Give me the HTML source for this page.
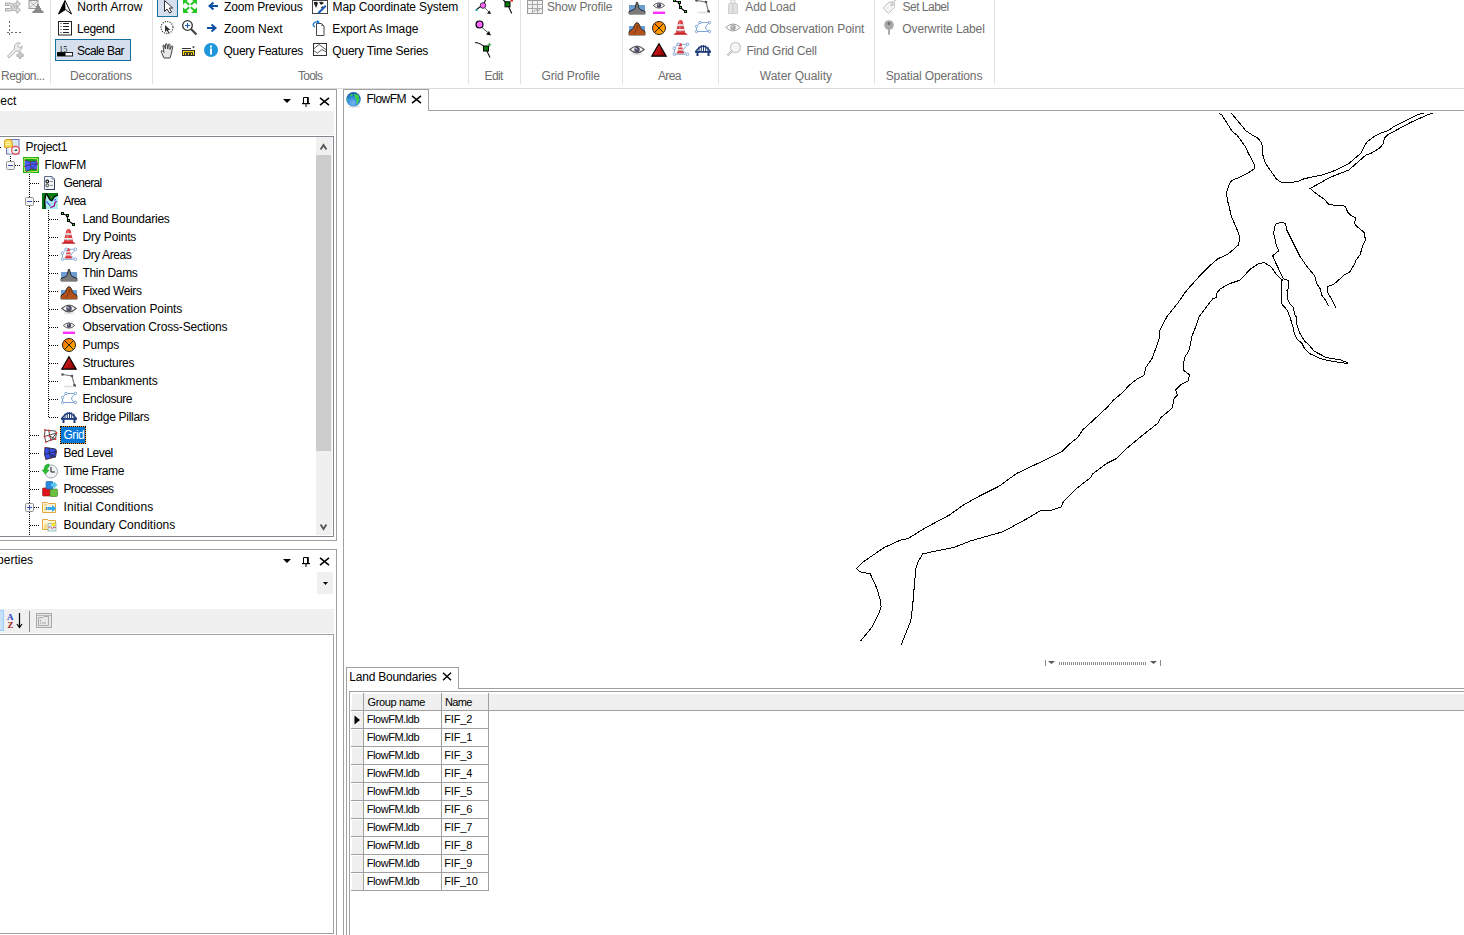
<!DOCTYPE html>
<html><head><meta charset="utf-8"><style>
html,body{margin:0;padding:0;}
body{width:1464px;height:935px;overflow:hidden;position:relative;background:#fff;font-family:"Liberation Sans", sans-serif;}
.t{position:absolute;white-space:nowrap;line-height:16px;}
.b{position:absolute;}
</style></head><body>
<div class="b" style="left:0px;top:88px;width:1464px;height:1px;background:#dcdcdc"></div>
<div class="b" style="left:50px;top:0px;width:1px;height:84px;background:#e1e1e1"></div>
<div class="b" style="left:152px;top:0px;width:1px;height:84px;background:#e1e1e1"></div>
<div class="b" style="left:468px;top:0px;width:1px;height:84px;background:#e1e1e1"></div>
<div class="b" style="left:520px;top:0px;width:1px;height:84px;background:#e1e1e1"></div>
<div class="b" style="left:622px;top:0px;width:1px;height:84px;background:#e1e1e1"></div>
<div class="b" style="left:718px;top:0px;width:1px;height:84px;background:#e1e1e1"></div>
<div class="b" style="left:874px;top:0px;width:1px;height:84px;background:#e1e1e1"></div>
<div class="b" style="left:994px;top:0px;width:1px;height:84px;background:#e1e1e1"></div>
<div class="t" style="left:1px;top:67.64px;font-size:12px;color:#6d6d6d;letter-spacing:-0.500px;">Region...</div>
<div class="t" style="left:70px;top:67.64px;font-size:12px;color:#6d6d6d;letter-spacing:-0.200px;">Decorations</div>
<div class="t" style="left:298px;top:67.64px;font-size:12px;color:#6d6d6d;letter-spacing:-0.750px;">Tools</div>
<div class="t" style="left:484.6px;top:67.64px;font-size:12px;color:#6d6d6d;letter-spacing:-0.667px;">Edit</div>
<div class="t" style="left:541.5px;top:67.64px;font-size:12px;color:#6d6d6d;letter-spacing:-0.136px;">Grid Profile</div>
<div class="t" style="left:658px;top:67.64px;font-size:12px;color:#6d6d6d;letter-spacing:-0.667px;">Area</div>
<div class="t" style="left:759.8px;top:67.64px;font-size:12px;color:#6d6d6d;letter-spacing:0.000px;">Water Quality</div>
<div class="t" style="left:885.7px;top:67.64px;font-size:12px;color:#6d6d6d;letter-spacing:-0.118px;">Spatial Operations</div>
<div class="b" style="left:55px;top:39px;width:76px;height:22px;background:#d5dfed;border:1px solid #16709f;box-sizing:border-box"></div>
<div class="t" style="left:77.2px;top:-1.26px;font-size:12px;color:#000;letter-spacing:0.200px;">North Arrow</div>
<div class="t" style="left:77.0px;top:20.64px;font-size:12px;color:#000;letter-spacing:-0.440px;">Legend</div>
<div class="t" style="left:77.0px;top:42.74px;font-size:12px;color:#000;letter-spacing:-0.562px;">Scale Bar</div>
<div class="b" style="left:157px;top:-5px;width:21px;height:22px;background:#d5dfed;border:1px solid #16709f;box-sizing:border-box"></div>
<div class="t" style="left:224px;top:-1.26px;font-size:12px;color:#000;letter-spacing:-0.167px;">Zoom Previous</div>
<div class="t" style="left:224px;top:20.64px;font-size:12px;color:#000;letter-spacing:0.000px;">Zoom Next</div>
<div class="t" style="left:223.5px;top:42.74px;font-size:12px;color:#000;letter-spacing:-0.269px;">Query Features</div>
<div class="t" style="left:332.6px;top:-1.26px;font-size:12px;color:#000;letter-spacing:-0.150px;">Map Coordinate System</div>
<div class="t" style="left:332.3px;top:20.64px;font-size:12px;color:#000;letter-spacing:-0.143px;">Export As Image</div>
<div class="t" style="left:332.3px;top:42.74px;font-size:12px;color:#000;letter-spacing:-0.206px;">Query Time Series</div>
<div class="t" style="left:547px;top:-1.26px;font-size:12px;color:#6d6d6d;letter-spacing:-0.182px;">Show Profile</div>
<div class="t" style="left:745.3px;top:-1.26px;font-size:12px;color:#6d6d6d;letter-spacing:-0.143px;">Add Load</div>
<div class="t" style="left:745.3px;top:20.64px;font-size:12px;color:#6d6d6d;letter-spacing:-0.050px;">Add Observation Point</div>
<div class="t" style="left:746.5px;top:42.74px;font-size:12px;color:#6d6d6d;letter-spacing:-0.231px;">Find Grid Cell</div>
<div class="t" style="left:902.5px;top:-1.26px;font-size:12px;color:#6d6d6d;letter-spacing:-0.500px;">Set Label</div>
<div class="t" style="left:902.3px;top:20.64px;font-size:12px;color:#6d6d6d;letter-spacing:-0.107px;">Overwrite Label</div>
<svg class="b" style="left:5px;top:0px;overflow:visible" width="16" height="16" viewBox="0 0 16 16"><g fill="#dedede" stroke="#a4a4a4" stroke-width="0.9" stroke-linejoin="round"><path d="M0.5 8.5 H4.5 Q6.5 8.5 7.5 6 Q8.5 3 11 3 H12 V0.5 L15.5 4 L12 7.5 V5.5 H11 Q10 5.5 9.5 7.5 Q8.5 11 5 11 H0.5z"/><path d="M0.5 3 H5 Q8 3 9 6 Q9.8 8.5 11 8.5 H12 V6.5 L15.5 10 L12 13.5 V11 H11 Q8 11 7 8 Q6.3 5.5 4.5 5.5 H0.5z"/></g></svg>
<svg class="b" style="left:28px;top:0px;overflow:visible" width="16" height="16" viewBox="0 0 16 16"><rect x="1" y="0.5" width="9" height="8" fill="#eee" stroke="#9a9a9a" stroke-width="1"/><path d="M2 1.5 L9 7.5 M9 1.5 L2 7.5" stroke="#9a9a9a" stroke-width="0.7"/><path d="M9 4 h2 v2 h1 v2 h1 v2 h1 v1 h1.5 v2 h-11 v-2 h1.5 v-1 h1 v-2 h1 v-2 h1z" fill="#8a8a8a"/></svg>
<svg class="b" style="left:7px;top:21px;overflow:visible" width="16" height="16" viewBox="0 0 16 16"><path d="M2.5 0 V14" stroke="#6a6a6a" stroke-dasharray="2 2" stroke-width="1"/><path d="M0 11.5 H15" stroke="#6a6a6a" stroke-dasharray="2 2" stroke-width="1"/></svg>
<svg class="b" style="left:6px;top:42px;overflow:visible" width="16" height="16" viewBox="0 0 16 16"><path d="M1.5 14 L8.5 7 Q7.5 3 10.5 1.2 Q12.5 0.3 14.2 1 L11.8 3.4 L12.6 5.4 L14.6 6 L16 3.8 Q16.5 6.8 14.2 8.6 Q12.2 9.8 10.2 9 L3 16z" fill="#ececec" stroke="#aaa" stroke-width="0.9"/><path d="M13 10 h2.2 v2.2 h2.2 v2.2 h-2.2 v2.2 h-2.2 v-2.2 h-2.2 v-2.2 h2.2z" fill="#c8c8c8" stroke="#a0a0a0" stroke-width="0.6"/></svg>
<svg class="b" style="left:58px;top:0px;overflow:visible" width="16" height="16" viewBox="0 0 16 16"><path d="M7 0.5 L13.5 14 L7.5 9.5 L0.5 14z" fill="#fff" stroke="#000" stroke-width="1"/><path d="M7 0.5 L7.5 9.5 L0.5 14z" fill="#000"/></svg>
<svg class="b" style="left:58px;top:21px;overflow:visible" width="16" height="16" viewBox="0 0 16 16"><rect x="0.5" y="0.5" width="13" height="13.5" fill="#fff" stroke="#222" stroke-width="1"/><path d="M2.5 2.5h1M2.5 5.5h1M2.5 8.5h1M2.5 11.5h1" stroke="#222" stroke-width="1"/><path d="M5 2.5h6M5 5.5h6M5 8.5h6M5 11.5h6" stroke="#222" stroke-width="1"/></svg>
<svg class="b" style="left:57px;top:44px;overflow:visible" width="16" height="16" viewBox="0 0 16 16"><text x="2" y="7.5" font-family="Liberation Serif" font-size="8.5" fill="#222">15</text><rect x="0.5" y="8.5" width="15" height="3.5" fill="#fff" stroke="#222" stroke-width="1"/><rect x="0.5" y="8.5" width="8" height="3.5" fill="#000"/></svg>
<svg class="b" style="left:163px;top:0px;overflow:visible" width="16" height="16" viewBox="0 0 16 16"><path d="M1.5 0.5 V11.5 L4 9 L6.5 13 L8.5 12 L6.3 8 L9.8 8z" fill="#fff" stroke="#333" stroke-width="1"/></svg>
<svg class="b" style="left:183px;top:0px;overflow:visible" width="16" height="16" viewBox="0 0 16 16"><g><path d="M0 7.2 V13 H5.8 Z" fill="#22c522"/><path d="M2 11 L6.2 7.2" stroke="#22c522" stroke-width="1.9"/></g><g transform="translate(14,0) scale(-1,1)"><path d="M0 7.2 V13 H5.8 Z" fill="#22c522"/><path d="M2 11 L6.2 7.2" stroke="#22c522" stroke-width="1.9"/></g><g transform="translate(0,12) scale(1,-1)"><path d="M0 7.2 V13 H5.8 Z" fill="#22c522"/><path d="M2 11 L6.2 7.2" stroke="#22c522" stroke-width="1.9"/></g><g transform="translate(14,12) scale(-1,-1)"><path d="M0 7.2 V13 H5.8 Z" fill="#22c522"/><path d="M2 11 L6.2 7.2" stroke="#22c522" stroke-width="1.9"/></g></svg>
<svg class="b" style="left:207px;top:2px;overflow:visible" width="16" height="16" viewBox="0 0 16 16"><path d="M11 4 H3 M6.5 0.5 L2.5 4 L6.5 7.5" stroke="#0b4fa2" stroke-width="2" fill="none"/></svg>
<svg class="b" style="left:160px;top:21px;overflow:visible" width="16" height="16" viewBox="0 0 16 16"><circle cx="7" cy="6.5" r="6" fill="none" stroke="#333" stroke-width="1.3" stroke-linecap="round" stroke-dasharray="0.01 2.35"/><path d="M5 4 V11 L6.8 9.5 L8.5 12.5 L9.5 12 L8 9 L10.5 9z" fill="#333"/></svg>
<svg class="b" style="left:182px;top:20px;overflow:visible" width="16" height="16" viewBox="0 0 16 16"><circle cx="5.5" cy="5.5" r="4.8" fill="none" stroke="#333" stroke-width="1.3"/><path d="M9 9 L14.5 14.5" stroke="#444" stroke-width="2.2"/><path d="M5.5 3 V8 M3 5.5 H8" stroke="#1a5fb4" stroke-width="1.2"/></svg>
<svg class="b" style="left:207px;top:24px;overflow:visible" width="16" height="16" viewBox="0 0 16 16"><path d="M0 4 H8 M4.5 0.5 L8.5 4 L4.5 7.5" stroke="#0b4fa2" stroke-width="2" fill="none"/></svg>
<svg class="b" style="left:160px;top:43px;overflow:visible" width="16" height="16" viewBox="0 0 16 16"><path d="M4 15 L1.5 9.5 Q0.5 7.5 2 7.5 L4 9.5 L3 3 Q3 1.8 4 2 L5.5 6 L5.5 1 Q6.3 0 7 1 L7.8 6 L8.5 1.3 Q9.5 0.5 10 1.5 L10 6.5 L11.5 3 Q12.5 2.5 12.8 3.5 L11.5 10 L10 15z" fill="#e8e8e8" stroke="#333" stroke-width="0.9"/></svg>
<svg class="b" style="left:182px;top:46px;overflow:visible" width="16" height="16" viewBox="0 0 16 16"><path d="M0 2.5 H9" stroke="#333" stroke-width="1"/><path d="M10 0.5 h3 l-1.5 2z" fill="#333"/><rect x="0.5" y="4.5" width="12" height="5" fill="#ffd800" stroke="#333" stroke-width="1"/><path d="M2.5 9.5V6.5h2v3M5.5 9.5V6.5h2v3M8.5 9.5V6.5h2v3" fill="none" stroke="#333" stroke-width="1"/></svg>
<svg class="b" style="left:204px;top:43px;overflow:visible" width="16" height="16" viewBox="0 0 16 16"><circle cx="7" cy="7" r="7" fill="#1e96dc"/><rect x="6" y="5.5" width="2" height="6" fill="#fff"/><rect x="6" y="2.5" width="2" height="2" fill="#fff"/></svg>
<svg class="b" style="left:312px;top:0px;overflow:visible" width="16" height="16" viewBox="0 0 16 16"><rect x="0.5" y="0.5" width="15" height="13" fill="#fff" stroke="#444" stroke-width="1"/><path d="M2 2 Q5 1 6 3 Q5 6 4 8 Q3 5 2 4z M7 2 Q10 1 12 3 L9 5z M10 6 Q12 7 11 9 L9 8z" fill="#222"/><path d="M5.5 12.5 L13 5 L14.5 6.5 L7 14z" fill="#1a5fb4"/></svg>
<svg class="b" style="left:312px;top:20px;overflow:visible" width="16" height="16" viewBox="0 0 16 16"><path d="M4.5 3.5 h5 l2.5 2.5 v9.5 h-7.5z" fill="#fff" stroke="#444" stroke-width="1"/><path d="M9.5 3.5 v2.5 h2.5" fill="#666"/><path d="M3 7 Q-0.5 5 2.5 2.5 Q4 1.5 6 2" stroke="#1a7ad4" stroke-width="1.3" fill="none"/><path d="M5 0 L8 2 L5 4z" fill="#1a7ad4"/></svg>
<svg class="b" style="left:313px;top:43px;overflow:visible" width="16" height="16" viewBox="0 0 16 16"><rect x="0.5" y="0.5" width="13" height="12" fill="#fff" stroke="#333" stroke-width="1"/><path d="M0.5 6 L6 1.5 L13.5 7 M0.5 7.5 L4.5 10 L9 6.5 L13.5 9" stroke="#333" stroke-width="0.8" fill="none"/></svg>
<svg class="b" style="left:475px;top:0px;overflow:visible" width="16" height="16" viewBox="0 0 16 16"><path d="M11 -1 L8.5 4.5 L1.5 9.5" stroke="#111" stroke-width="1.1" fill="none"/><circle cx="8" cy="5.5" r="2.8" fill="#ff66ff" stroke="#111" stroke-width="0.8"/><rect x="0.5" y="9" width="2" height="2" fill="#20a0b0"/><path d="M10 8 L14 12" stroke="#333" stroke-width="0.7"/><path d="M12 13.5 L16 14 L14.5 10.5z" fill="#111"/></svg>
<svg class="b" style="left:501px;top:0px;overflow:visible" width="16" height="16" viewBox="0 0 16 16"><path d="M1.5 -1 L6.5 4.3 L10.8 13.5" stroke="#111" stroke-width="1.1" fill="none"/><rect x="4" y="1.8" width="5" height="5" fill="#0a7a0a" stroke="#000" stroke-width="1"/><rect x="9.5" y="0" width="2.5" height="1.5" fill="#e02020"/></svg>
<svg class="b" style="left:475px;top:20px;overflow:visible" width="16" height="16" viewBox="0 0 16 16"><circle cx="4.5" cy="4.5" r="3.5" fill="#ff66ff" stroke="#000" stroke-width="1.2"/><path d="M7 7.5 L13.5 13" stroke="#222" stroke-width="0.8"/><path d="M11 14.5 L16 15.5 L14 11z" fill="#111"/></svg>
<svg class="b" style="left:475px;top:42px;overflow:visible" width="16" height="16" viewBox="0 0 16 16"><path d="M0 0.5 Q6 1 10.5 6 L15 15.5" stroke="#111" stroke-width="1.1" fill="none"/><rect x="8.5" y="4" width="5" height="5" fill="#0a7a0a" stroke="#000" stroke-width="1"/><path d="M14.5 1 V4.6 M12.7 2.8 H16.3" stroke="#2a9a2a" stroke-width="0.9"/></svg>
<svg class="b" style="left:527px;top:0px;overflow:visible" width="16" height="16" viewBox="0 0 16 16"><rect x="0.5" y="0.5" width="15" height="13" fill="#f2f2f2" stroke="#9a9a9a"/><path d="M0.5 4.5h15M0.5 8.5h15M5.5 0.5v13M10.5 0.5v13" stroke="#aaa"/><path d="M6.5 12 L9 9.5 L11 11 L14 8" stroke="#999" fill="none"/></svg>
<svg class="b" style="left:727px;top:0px;overflow:visible" width="16" height="16" viewBox="0 0 16 16"><rect x="4" y="0" width="4" height="3" fill="none" stroke="#ccc"/><path d="M2 3.5 h8 l0.5 1 v9 h-9 v-9z" fill="#e2e2e2" stroke="#cfcfcf"/><rect x="5" y="4" width="2" height="9" fill="#d5d5d5"/></svg>
<svg class="b" style="left:725px;top:23px;overflow:visible" width="16" height="16" viewBox="0 0 16 16"><path d="M0.8 4.5 Q8 -2.5 15.2 4.5 Q8 11.5 0.8 4.5z" fill="#fff" stroke="#9a9a9a" stroke-width="1"/><circle cx="8" cy="4.5" r="2.8" fill="#a8a8a8"/><circle cx="7.2" cy="3.8" r="0.8" fill="#eee"/></svg>
<svg class="b" style="left:726px;top:42px;overflow:visible" width="16" height="16" viewBox="0 0 16 16"><circle cx="9.5" cy="5.5" r="5" fill="#f4f4f4" stroke="#c4c4c4" stroke-width="1.1"/><path d="M6 9 L1.5 13.5" stroke="#bbb" stroke-width="2.4"/><path d="M6 9 L1.5 13.5" stroke="#f4f4f4" stroke-width="0.8"/></svg>
<svg class="b" style="left:882px;top:0px;overflow:visible" width="16" height="16" viewBox="0 0 16 16"><path d="M1 8 L7 2 L12.5 2 L12.5 7.5 L6.5 13.5z" fill="#f2f2f2" stroke="#c4c4c4" stroke-width="1"/><circle cx="10" cy="4.5" r="1.1" fill="none" stroke="#bbb"/><path d="M10 3.5 Q12 -1 14 1" stroke="#c4c4c4" fill="none"/></svg>
<svg class="b" style="left:884px;top:20px;overflow:visible" width="16" height="16" viewBox="0 0 16 16"><circle cx="5" cy="5" r="4.8" fill="#a9a9a9"/><circle cx="5" cy="3.5" r="1.5" fill="#6e6e6e"/><rect x="4" y="8" width="2" height="7" rx="1" fill="#a9a9a9"/></svg>
<svg class="b" style="left:629px;top:2px;overflow:visible" width="16" height="16" viewBox="0 0 16 16"><rect x="0" y="3" width="16" height="9" fill="#6e9ed0"/><path d="M0 9.5 L5 7.5 Q6.5 6.5 6.8 3 Q7.2 0 8 0 Q8.8 0 9.2 3 Q9.5 6.5 11 7.5 L16 9.5 V12 H0z" fill="#7a7a7a" stroke="#111" stroke-width="0.8"/><rect x="0" y="10" width="16" height="2" fill="#7a7a7a"/></svg>
<svg class="b" style="left:651px;top:2px;overflow:visible" width="16" height="16" viewBox="0 0 16 16"><path d="M2.3 3.5 Q8 -1.8 13.7 3.5 Q8 8.8 2.3 3.5z" fill="#fafafa" stroke="#5a5a5a" stroke-width="1"/><circle cx="8" cy="3.5" r="2.2" fill="#46465e"/><circle cx="7.3" cy="2.8" r="0.6" fill="#fff"/><rect x="2" y="9.6" width="12" height="2.4" fill="#ff30ff"/></svg>
<svg class="b" style="left:673px;top:-1px;overflow:visible" width="16" height="16" viewBox="0 0 16 16"><path d="M1 1.5 L6 3.5 L7 8.5 L12.5 12.5" stroke="#000" stroke-width="1.2" fill="none"/><rect x="0" y="0" width="3" height="3" fill="#000"/><rect x="5" y="2" width="3" height="3" fill="#000"/><rect x="6" y="7" width="3" height="3" fill="#000"/><rect x="11" y="11" width="3" height="3" fill="#000"/><rect x="1" y="1" width="1" height="1" fill="#2f2"/><rect x="6" y="3" width="1" height="1" fill="#2f2"/><rect x="7" y="8" width="1" height="1" fill="#2f2"/><rect x="12" y="12" width="1" height="1" fill="#2f2"/></svg>
<svg class="b" style="left:695px;top:-1px;overflow:visible" width="16" height="16" viewBox="0 0 16 16"><path d="M1.5 1.5 L11 3 L13.5 12.5" stroke="#777" stroke-width="1.1" fill="none"/><circle cx="1.5" cy="1.5" r="1.3" fill="#555"/><circle cx="11" cy="3" r="1.3" fill="#555"/><circle cx="13.5" cy="12.5" r="1.5" fill="#444"/><ellipse cx="8" cy="13.5" rx="6" ry="0.9" fill="#e2e2e2"/></svg>
<svg class="b" style="left:629px;top:23px;overflow:visible" width="16" height="16" viewBox="0 0 16 16"><rect x="0" y="3" width="16" height="9" fill="#6e9ed0"/><path d="M0 8.5 L3 6.5 Q5 5 5.5 2 Q6.5 -0.3 8 -0.3 Q9.5 -0.3 10.5 2 Q11 5 13 6.5 L16 8.5 V12 H0z" fill="#b0501a" stroke="#111" stroke-width="0.8"/><rect x="0" y="9.5" width="16" height="2.5" fill="#b0501a"/><path d="M5 11 Q8 6 9 2" stroke="#8a3a10" fill="none"/></svg>
<svg class="b" style="left:652px;top:21px;overflow:visible" width="16" height="16" viewBox="0 0 16 16"><defs><linearGradient id="pg" x1="0" y1="0" x2="1" y2="1"><stop offset="0" stop-color="#ff6a00"/><stop offset="1" stop-color="#ffb800"/></linearGradient></defs><circle cx="7" cy="7" r="6.5" fill="url(#pg)" stroke="#222" stroke-width="1"/><path d="M2.5 2.5 L11.5 11.5 M11.5 2.5 L2.5 11.5" stroke="#222" stroke-width="1"/></svg>
<svg class="b" style="left:673px;top:20px;overflow:visible" width="16" height="16" viewBox="0 0 16 16"><path d="M4.8 4 Q5 0 7.5 0 Q10 0 10.2 4 L12.3 13.2 H2.7z" fill="#e23c40"/><path d="M7 1 Q6.5 6 7 12" stroke="#f08a8a" stroke-width="1" fill="none"/><path d="M4.6 4.3 H10.4 L10.8 6 H4.2z M3.7 9 H11.3 L11.7 10.8 H3.3z" fill="#eef2f2"/><path d="M4.3 5.9 H10.7 M3.4 10.8 H11.6" stroke="#9ab0b0" stroke-width="0.5"/><path d="M0.3 14.7 Q1.5 13 3 13 H12 Q13.5 13 14.7 14.7z" fill="#c42024"/></svg>
<svg class="b" style="left:695px;top:21px;overflow:visible" width="16" height="16" viewBox="0 0 16 16"><path d="M1.5 10.5 L1.5 5.5 L5 1.5 L14.5 1.5 Q10 5 10.5 7 Q11 9 14.5 10.5z" fill="none" stroke="#7fa6d6" stroke-width="1"/><circle cx="5" cy="1.5" r="1.2" fill="#fff" stroke="#7fa6d6"/><circle cx="14.5" cy="1.5" r="1.2" fill="#fff" stroke="#7fa6d6"/><circle cx="1.5" cy="5.5" r="1.2" fill="#fff" stroke="#7fa6d6"/><circle cx="1.5" cy="10.5" r="1.2" fill="#fff" stroke="#7fa6d6"/><circle cx="14.5" cy="10.5" r="1.2" fill="#fff" stroke="#7fa6d6"/></svg>
<svg class="b" style="left:629px;top:45px;overflow:visible" width="16" height="16" viewBox="0 0 16 16"><ellipse cx="8" cy="9.3" rx="5.5" ry="1" fill="#e4e4e4"/><path d="M0.8 4.5 Q8 -2.3 15.2 4.5 Q8 11.3 0.8 4.5z" fill="#fafafa" stroke="#5a5a5a" stroke-width="1.1"/><circle cx="8" cy="4.5" r="2.7" fill="#46465e"/><circle cx="8" cy="4.5" r="1.2" fill="#6a6a90"/><circle cx="7" cy="3.6" r="0.7" fill="#fff"/></svg>
<svg class="b" style="left:651px;top:43px;overflow:visible" width="16" height="16" viewBox="0 0 16 16"><defs><linearGradient id="sg" x1="0" y1="0" x2="1" y2="0.6"><stop offset="0" stop-color="#ff2a2a"/><stop offset="1" stop-color="#8a0000"/></linearGradient></defs><path d="M8 0.8 L15.2 13.2 H0.8z" fill="url(#sg)" stroke="#000" stroke-width="1.2" stroke-linejoin="miter"/></svg>
<svg class="b" style="left:673px;top:42px;overflow:visible" width="16" height="16" viewBox="0 0 16 16"><path d="M5.1 2.3 H14.5 L9.5 8.5 L14.5 12.3 H1.4 V6.3z" fill="none" stroke="#88aad8" stroke-width="1"/><path d="M5.8 4 Q6 1 7.4 1 Q8.8 1 9 4 L10.4 10.2 H4.4z" fill="#e23c40"/><path d="M5.6 4.3 H9.2 L9.5 5.6 H5.3z M5 7.2 H9.8 L10.1 8.5 H4.7z" fill="#eef2f2"/><path d="M3.8 10.8 H11" stroke="#c42024" stroke-width="1.2"/><g fill="#fff" stroke="#88aad8" stroke-width="1"><circle cx="1.4" cy="6.3" r="1.3"/><circle cx="5.1" cy="2.3" r="1.3"/><circle cx="14.5" cy="2.3" r="1.3"/><circle cx="14.5" cy="12.3" r="1.3"/><circle cx="1.4" cy="12.3" r="1.3"/></g></svg>
<svg class="b" style="left:695px;top:43px;overflow:visible" width="16" height="16" viewBox="0 0 16 16"><path d="M0.8 8.5 Q8 -2 15.2 8.5" stroke="#1e3a7a" stroke-width="1.6" fill="none"/><path d="M4 3.5V8 M6.3 2.3V8 M8.5 2V8 M10.7 2.4V8 M13 3.6V8" stroke="#1e3a7a" stroke-width="1"/><rect x="0" y="8" width="16" height="1.8" fill="#1e3a7a"/><rect x="1.5" y="9" width="2" height="4" fill="#1e3a7a"/><rect x="12.5" y="9" width="2" height="4" fill="#1e3a7a"/></svg>
<div class="b" style="left:336px;top:89px;width:1px;height:452px;background:#a0a0a0"></div>
<div class="b" style="left:0px;top:89px;width:337px;height:1px;background:#a0a0a0"></div>
<div class="b" style="left:0px;top:540px;width:337px;height:1px;background:#a0a0a0"></div>
<div class="t" style="left:-21px;top:92.54px;font-size:12px;color:#000;">Project</div>
<div class="b" style="left:0px;top:111px;width:334px;height:24px;background:#f0f0f0"></div>
<div class="b" style="left:0px;top:136px;width:334px;height:1px;background:#828790"></div>
<div class="b" style="left:333px;top:136px;width:1px;height:401px;background:#828790"></div>
<div class="b" style="left:0px;top:536px;width:334px;height:1px;background:#828790"></div>
<div class="b" style="left:316px;top:137px;width:16px;height:398px;background:#f0f0f0"></div>
<div class="b" style="left:316px;top:155px;width:15px;height:296px;background:#cdcdcd"></div>
<div class="b" style="left:0px;top:549px;width:337px;height:1px;background:#a0a0a0"></div>
<div class="b" style="left:336px;top:549px;width:1px;height:386px;background:#a0a0a0"></div>
<div class="t" style="left:-21.6px;top:552.14px;font-size:12px;color:#000;">Properties</div>
<div class="b" style="left:317px;top:572px;width:16px;height:22px;background:#f0f0f0"></div>
<div class="b" style="left:0px;top:609px;width:334px;height:24px;background:#f0f0f0"></div>
<div class="b" style="left:0px;top:634px;width:334px;height:1px;background:#a0a0a0"></div>
<div class="b" style="left:333px;top:634px;width:1px;height:300px;background:#a0a0a0"></div>
<div class="b" style="left:0px;top:933px;width:334px;height:1px;background:#a0a0a0"></div>
<div class="b" style="left:343px;top:89px;width:1px;height:846px;background:#a0a0a0"></div>
<div class="b" style="left:343px;top:89px;width:86px;height:1px;background:#a0a0a0"></div>
<div class="b" style="left:428px;top:89px;width:1px;height:22px;background:#a0a0a0"></div>
<div class="b" style="left:428px;top:110px;width:1036px;height:1px;background:#a0a0a0"></div>
<div class="t" style="left:366.5px;top:90.54px;font-size:12px;color:#000;letter-spacing:-0.540px;">FlowFM</div>
<div class="b" style="left:346px;top:667px;width:113px;height:1px;background:#a0a0a0"></div>
<div class="b" style="left:346px;top:667px;width:1px;height:268px;background:#a0a0a0"></div>
<div class="b" style="left:458px;top:667px;width:1px;height:22px;background:#a0a0a0"></div>
<div class="b" style="left:458px;top:688px;width:1006px;height:1px;background:#a0a0a0"></div>
<div class="t" style="left:349.3px;top:668.84px;font-size:12px;color:#000;letter-spacing:-0.229px;">Land Boundaries</div>
<div class="b" style="left:349px;top:691px;width:1115px;height:1px;background:#a0a0a0"></div>
<div class="b" style="left:349px;top:691px;width:1px;height:244px;background:#a0a0a0"></div>
<div class="b" style="left:0px;top:147px;width:2px;height:1px;background:repeating-linear-gradient(to right,#000 0 1px,transparent 1px 2px)"></div>
<div class="b" style="left:10px;top:156px;width:1px;height:5px;background:repeating-linear-gradient(to bottom,#000 0 1px,transparent 1px 2px)"></div>
<div class="b" style="left:15px;top:165px;width:5px;height:1px;background:repeating-linear-gradient(to right,#000 0 1px,transparent 1px 2px)"></div>
<div class="b" style="left:29px;top:174px;width:1px;height:362px;background:repeating-linear-gradient(to bottom,#000 0 1px,transparent 1px 2px)"></div>
<div class="b" style="left:48px;top:210px;width:1px;height:207px;background:repeating-linear-gradient(to bottom,#000 0 1px,transparent 1px 2px)"></div>
<div class="b" style="left:30px;top:183px;width:9px;height:1px;background:repeating-linear-gradient(to right,#000 0 1px,transparent 1px 2px)"></div>
<div class="b" style="left:30px;top:201px;width:9px;height:1px;background:repeating-linear-gradient(to right,#000 0 1px,transparent 1px 2px)"></div>
<div class="b" style="left:49px;top:219px;width:9px;height:1px;background:repeating-linear-gradient(to right,#000 0 1px,transparent 1px 2px)"></div>
<div class="b" style="left:49px;top:237px;width:9px;height:1px;background:repeating-linear-gradient(to right,#000 0 1px,transparent 1px 2px)"></div>
<div class="b" style="left:49px;top:255px;width:9px;height:1px;background:repeating-linear-gradient(to right,#000 0 1px,transparent 1px 2px)"></div>
<div class="b" style="left:49px;top:273px;width:9px;height:1px;background:repeating-linear-gradient(to right,#000 0 1px,transparent 1px 2px)"></div>
<div class="b" style="left:49px;top:291px;width:9px;height:1px;background:repeating-linear-gradient(to right,#000 0 1px,transparent 1px 2px)"></div>
<div class="b" style="left:49px;top:309px;width:9px;height:1px;background:repeating-linear-gradient(to right,#000 0 1px,transparent 1px 2px)"></div>
<div class="b" style="left:49px;top:327px;width:9px;height:1px;background:repeating-linear-gradient(to right,#000 0 1px,transparent 1px 2px)"></div>
<div class="b" style="left:49px;top:345px;width:9px;height:1px;background:repeating-linear-gradient(to right,#000 0 1px,transparent 1px 2px)"></div>
<div class="b" style="left:49px;top:363px;width:9px;height:1px;background:repeating-linear-gradient(to right,#000 0 1px,transparent 1px 2px)"></div>
<div class="b" style="left:49px;top:381px;width:9px;height:1px;background:repeating-linear-gradient(to right,#000 0 1px,transparent 1px 2px)"></div>
<div class="b" style="left:49px;top:399px;width:9px;height:1px;background:repeating-linear-gradient(to right,#000 0 1px,transparent 1px 2px)"></div>
<div class="b" style="left:49px;top:417px;width:9px;height:1px;background:repeating-linear-gradient(to right,#000 0 1px,transparent 1px 2px)"></div>
<div class="b" style="left:30px;top:435px;width:9px;height:1px;background:repeating-linear-gradient(to right,#000 0 1px,transparent 1px 2px)"></div>
<div class="b" style="left:30px;top:453px;width:9px;height:1px;background:repeating-linear-gradient(to right,#000 0 1px,transparent 1px 2px)"></div>
<div class="b" style="left:30px;top:471px;width:9px;height:1px;background:repeating-linear-gradient(to right,#000 0 1px,transparent 1px 2px)"></div>
<div class="b" style="left:30px;top:489px;width:9px;height:1px;background:repeating-linear-gradient(to right,#000 0 1px,transparent 1px 2px)"></div>
<div class="b" style="left:30px;top:507px;width:9px;height:1px;background:repeating-linear-gradient(to right,#000 0 1px,transparent 1px 2px)"></div>
<div class="b" style="left:30px;top:525px;width:9px;height:1px;background:repeating-linear-gradient(to right,#000 0 1px,transparent 1px 2px)"></div>
<div class="t" style="left:25.5px;top:139.14px;font-size:12px;color:#000;letter-spacing:-0.286px;">Project1</div>
<div class="t" style="left:44.6px;top:157.14px;font-size:12px;color:#000;letter-spacing:-0.220px;">FlowFM</div>
<div class="t" style="left:63.5px;top:175.14px;font-size:12px;color:#000;letter-spacing:-0.667px;">General</div>
<div class="t" style="left:63.5px;top:193.14px;font-size:12px;color:#000;letter-spacing:-0.867px;">Area</div>
<div class="t" style="left:82.5px;top:211.14px;font-size:12px;color:#000;letter-spacing:-0.243px;">Land Boundaries</div>
<div class="t" style="left:82.5px;top:229.14px;font-size:12px;color:#000;letter-spacing:-0.167px;">Dry Points</div>
<div class="t" style="left:82.5px;top:247.14px;font-size:12px;color:#000;letter-spacing:-0.438px;">Dry Areas</div>
<div class="t" style="left:82.5px;top:265.14px;font-size:12px;color:#000;letter-spacing:-0.338px;">Thin Dams</div>
<div class="t" style="left:82.5px;top:283.14px;font-size:12px;color:#000;letter-spacing:-0.370px;">Fixed Weirs</div>
<div class="t" style="left:82.5px;top:301.14px;font-size:12px;color:#000;letter-spacing:-0.094px;">Observation Points</div>
<div class="t" style="left:82.5px;top:319.14px;font-size:12px;color:#000;letter-spacing:-0.180px;">Observation Cross-Sections</div>
<div class="t" style="left:82.5px;top:337.14px;font-size:12px;color:#000;letter-spacing:-0.125px;">Pumps</div>
<div class="t" style="left:82.5px;top:355.14px;font-size:12px;color:#000;letter-spacing:-0.300px;">Structures</div>
<div class="t" style="left:82.5px;top:373.14px;font-size:12px;color:#000;letter-spacing:-0.150px;">Embankments</div>
<div class="t" style="left:82.5px;top:391.14px;font-size:12px;color:#000;letter-spacing:-0.425px;">Enclosure</div>
<div class="t" style="left:82.5px;top:409.14px;font-size:12px;color:#000;letter-spacing:-0.277px;">Bridge Pillars</div>
<div class="b" style="left:60px;top:426px;width:26px;height:18px;background:#0078d7;border:1px solid #ff9a30;box-sizing:border-box;outline:1px dotted #000;outline-offset:-1px"></div>
<div class="t" style="left:63.5px;top:427.14px;font-size:12px;color:#fff;letter-spacing:-0.467px;">Grid</div>
<div class="t" style="left:63.5px;top:445.14px;font-size:12px;color:#000;letter-spacing:-0.450px;">Bed Level</div>
<div class="t" style="left:63.5px;top:463.14px;font-size:12px;color:#000;letter-spacing:-0.367px;">Time Frame</div>
<div class="t" style="left:63.5px;top:481.14px;font-size:12px;color:#000;letter-spacing:-0.675px;">Processes</div>
<div class="t" style="left:63.5px;top:499.14px;font-size:12px;color:#000;letter-spacing:0.094px;">Initial Conditions</div>
<div class="t" style="left:63.5px;top:517.14px;font-size:12px;color:#000;letter-spacing:0.022px;">Boundary Conditions</div>
<svg class="b" style="left:6px;top:161px;" width="9" height="9" viewBox="0 0 9 9"><rect x="0.5" y="0.5" width="8" height="8" rx="1" fill="#f4f4f4" stroke="#919191"/><rect x="2" y="4" width="5" height="1" fill="#3a50a8"/></svg>
<svg class="b" style="left:25px;top:197px;" width="9" height="9" viewBox="0 0 9 9"><rect x="0.5" y="0.5" width="8" height="8" rx="1" fill="#f4f4f4" stroke="#919191"/><rect x="2" y="4" width="5" height="1" fill="#3a50a8"/></svg>
<svg class="b" style="left:25px;top:503px;" width="9" height="9" viewBox="0 0 9 9"><rect x="0.5" y="0.5" width="8" height="8" rx="1" fill="#f4f4f4" stroke="#919191"/><rect x="2" y="4" width="5" height="1" fill="#3a50a8"/><rect x="4" y="2" width="1" height="5" fill="#3a50a8"/></svg>
<svg class="b" style="left:4px;top:139px;overflow:visible" width="16" height="16" viewBox="0 0 16 16"><rect x="2.5" y="0.5" width="12.5" height="14.5" fill="#d4e8f6" stroke="#7a78b0" stroke-width="1"/><rect x="5" y="1" width="2.5" height="13.5" fill="#f4fbff"/><path d="M0.5 1.5 L3 0.5 L6 0.5 L8 2 L8.5 8 L0.5 8.5z" fill="#f8dc60" stroke="#dca020" stroke-width="1"/><path d="M1.5 3.5 h5 M1.5 5.5 h5" stroke="#fff2a8" stroke-width="1"/><circle cx="11.5" cy="11.2" r="3.9" fill="#e6f6fc" stroke="#ee4444" stroke-width="1.2"/><path d="M10 12 L12.2 10 L13.5 11.8z" fill="#333"/></svg>
<svg class="b" style="left:23px;top:157px;overflow:visible" width="16" height="16" viewBox="0 0 16 16"><rect x="0" y="0" width="16" height="16" fill="#10b410"/><path d="M1.3 1.5 Q8 0.8 14.5 1.8 Q15.3 8 14.6 14.3 Q8 15.2 1.6 14.6 Q0.8 8 1.3 1.5z" fill="none" stroke="#d8e870" stroke-width="1"/><path d="M2.1 3.3 L7.5 4.5 L13.7 4.1 L14.8 6.4 L13.7 12.6 L8.4 11.8 L3.6 14.5 L1.7 9.5z" fill="#4a5cf8"/><path d="M2.1 3.3 L7.5 4.5 L13.7 4.1 M7.5 4.5 L7.3 7.6 L8.4 11.8 M1.7 9.5 L7.3 7.6 L14.8 6.4 M8.4 11.8 L14.8 6.4 M3.6 14.5 L8.4 11.8 L13.7 12.6" fill="none" stroke="#2a2a50" stroke-width="0.7"/><g fill="#e02828"><circle cx="2.1" cy="3.3" r="0.6"/><circle cx="7.5" cy="4.5" r="0.6"/><circle cx="13.7" cy="4.1" r="0.6"/><circle cx="14.8" cy="6.4" r="0.6"/><circle cx="7.3" cy="7.6" r="0.6"/><circle cx="1.7" cy="9.5" r="0.6"/><circle cx="8.4" cy="11.8" r="0.6"/><circle cx="13.7" cy="12.6" r="0.6"/><circle cx="3.6" cy="14.5" r="0.6"/></g></svg>
<svg class="b" style="left:42px;top:175px;overflow:visible" width="16" height="16" viewBox="0 0 16 16"><path d="M2.5 1.5 H10 L12.5 4 V14.5 H2.5z" fill="#f2f4fa" stroke="#5a6a88" stroke-width="1"/><path d="M10 1.5 V4 H12.5" fill="#d0d8e8" stroke="#5a6a88" stroke-width="0.8"/><path d="M12.5 5 V14.5 H4" stroke="#2a3a58" stroke-width="1" fill="none"/><circle cx="5.3" cy="6.5" r="1.4" fill="none" stroke="#111" stroke-width="1.1"/><circle cx="5.3" cy="10.4" r="1.4" fill="none" stroke="#333" stroke-width="1"/><path d="M8 6.5h3M8 10.4h3" stroke="#8a8a8a" stroke-width="1"/></svg>
<svg class="b" style="left:42px;top:193px;overflow:visible" width="16" height="16" viewBox="0 0 16 16"><rect x="0" y="0" width="16" height="16" fill="#007a10"/><path d="M3.9 1.2 L8 6.8 L9.8 7.8 L12.6 3.6 L16 2 V16 H3.2 Q2 8 3.9 1.2z" fill="#a8f0f8"/><path d="M3.2 16 Q2 8 3.9 1.2 L5 1.2 Q6.5 4.5 8 6.8 L9.8 7.8 L12.6 3.6 L16 2" stroke="#000" stroke-width="1.2" fill="none"/><path d="M4.4 8.3 L8.4 12.8 M12.5 7.6 L13.8 6.1" stroke="#4a4ae8" stroke-width="1.1"/><path d="M8.4 14.6 L12.2 13 L13 9.5 L14.8 8.3" stroke="#a0108a" stroke-width="1.3" fill="none"/><circle cx="9.3" cy="3.8" r="0.6" fill="#e05a40"/><circle cx="3.8" cy="6.8" r="0.6" fill="#f06060"/><circle cx="5" cy="4.5" r="0.6" fill="#c0f040"/><circle cx="9.2" cy="10.3" r="0.6" fill="#f09090"/><circle cx="6.3" cy="14.3" r="0.6" fill="#c0f040"/><circle cx="14.3" cy="12.4" r="0.6" fill="#c0f040"/></svg>
<svg class="b" style="left:61px;top:212px;overflow:visible" width="16" height="16" viewBox="0 0 16 16"><path d="M1 1.5 L6 3.5 L7 8.5 L12.5 12.5" stroke="#000" stroke-width="1.2" fill="none"/><rect x="0" y="0" width="3" height="3" fill="#000"/><rect x="5" y="2" width="3" height="3" fill="#000"/><rect x="6" y="7" width="3" height="3" fill="#000"/><rect x="11" y="11" width="3" height="3" fill="#000"/><rect x="1" y="1" width="1" height="1" fill="#2f2"/><rect x="6" y="3" width="1" height="1" fill="#2f2"/><rect x="7" y="8" width="1" height="1" fill="#2f2"/><rect x="12" y="12" width="1" height="1" fill="#2f2"/></svg>
<svg class="b" style="left:61px;top:229px;overflow:visible" width="16" height="16" viewBox="0 0 16 16"><path d="M4.8 4 Q5 0 7.5 0 Q10 0 10.2 4 L12.3 13.2 H2.7z" fill="#e23c40"/><path d="M7 1 Q6.5 6 7 12" stroke="#f08a8a" stroke-width="1" fill="none"/><path d="M4.6 4.3 H10.4 L10.8 6 H4.2z M3.7 9 H11.3 L11.7 10.8 H3.3z" fill="#eef2f2"/><path d="M4.3 5.9 H10.7 M3.4 10.8 H11.6" stroke="#9ab0b0" stroke-width="0.5"/><path d="M0.3 14.7 Q1.5 13 3 13 H12 Q13.5 13 14.7 14.7z" fill="#c42024"/></svg>
<svg class="b" style="left:61px;top:247px;overflow:visible" width="16" height="16" viewBox="0 0 16 16"><path d="M5.1 2.3 H14.5 L9.5 8.5 L14.5 12.3 H1.4 V6.3z" fill="none" stroke="#88aad8" stroke-width="1"/><path d="M5.8 4 Q6 1 7.4 1 Q8.8 1 9 4 L10.4 10.2 H4.4z" fill="#e23c40"/><path d="M5.6 4.3 H9.2 L9.5 5.6 H5.3z M5 7.2 H9.8 L10.1 8.5 H4.7z" fill="#eef2f2"/><path d="M3.8 10.8 H11" stroke="#c42024" stroke-width="1.2"/><g fill="#fff" stroke="#88aad8" stroke-width="1"><circle cx="1.4" cy="6.3" r="1.3"/><circle cx="5.1" cy="2.3" r="1.3"/><circle cx="14.5" cy="2.3" r="1.3"/><circle cx="14.5" cy="12.3" r="1.3"/><circle cx="1.4" cy="12.3" r="1.3"/></g></svg>
<svg class="b" style="left:61px;top:269px;overflow:visible" width="16" height="16" viewBox="0 0 16 16"><rect x="0" y="3" width="16" height="9" fill="#6e9ed0"/><path d="M0 9.5 L5 7.5 Q6.5 6.5 6.8 3 Q7.2 0 8 0 Q8.8 0 9.2 3 Q9.5 6.5 11 7.5 L16 9.5 V12 H0z" fill="#7a7a7a" stroke="#111" stroke-width="0.8"/><rect x="0" y="10" width="16" height="2" fill="#7a7a7a"/></svg>
<svg class="b" style="left:61px;top:287px;overflow:visible" width="16" height="16" viewBox="0 0 16 16"><rect x="0" y="3" width="16" height="9" fill="#6e9ed0"/><path d="M0 8.5 L3 6.5 Q5 5 5.5 2 Q6.5 -0.3 8 -0.3 Q9.5 -0.3 10.5 2 Q11 5 13 6.5 L16 8.5 V12 H0z" fill="#b0501a" stroke="#111" stroke-width="0.8"/><rect x="0" y="9.5" width="16" height="2.5" fill="#b0501a"/><path d="M5 11 Q8 6 9 2" stroke="#8a3a10" fill="none"/></svg>
<svg class="b" style="left:61px;top:304px;overflow:visible" width="16" height="16" viewBox="0 0 16 16"><ellipse cx="8" cy="9.3" rx="5.5" ry="1" fill="#e4e4e4"/><path d="M0.8 4.5 Q8 -2.3 15.2 4.5 Q8 11.3 0.8 4.5z" fill="#fafafa" stroke="#5a5a5a" stroke-width="1.1"/><circle cx="8" cy="4.5" r="2.7" fill="#46465e"/><circle cx="8" cy="4.5" r="1.2" fill="#6a6a90"/><circle cx="7" cy="3.6" r="0.7" fill="#fff"/></svg>
<svg class="b" style="left:61px;top:322px;overflow:visible" width="16" height="16" viewBox="0 0 16 16"><path d="M2.3 3.5 Q8 -1.8 13.7 3.5 Q8 8.8 2.3 3.5z" fill="#fafafa" stroke="#5a5a5a" stroke-width="1"/><circle cx="8" cy="3.5" r="2.2" fill="#46465e"/><circle cx="7.3" cy="2.8" r="0.6" fill="#fff"/><rect x="2" y="9.6" width="12" height="2.4" fill="#ff30ff"/></svg>
<svg class="b" style="left:62px;top:338px;overflow:visible" width="16" height="16" viewBox="0 0 16 16"><defs><linearGradient id="pg" x1="0" y1="0" x2="1" y2="1"><stop offset="0" stop-color="#ff6a00"/><stop offset="1" stop-color="#ffb800"/></linearGradient></defs><circle cx="7" cy="7" r="6.5" fill="url(#pg)" stroke="#222" stroke-width="1"/><path d="M2.5 2.5 L11.5 11.5 M11.5 2.5 L2.5 11.5" stroke="#222" stroke-width="1"/></svg>
<svg class="b" style="left:61px;top:356px;overflow:visible" width="16" height="16" viewBox="0 0 16 16"><defs><linearGradient id="sg" x1="0" y1="0" x2="1" y2="0.6"><stop offset="0" stop-color="#ff2a2a"/><stop offset="1" stop-color="#8a0000"/></linearGradient></defs><path d="M8 0.8 L15.2 13.2 H0.8z" fill="url(#sg)" stroke="#000" stroke-width="1.2" stroke-linejoin="miter"/></svg>
<svg class="b" style="left:61px;top:373px;overflow:visible" width="16" height="16" viewBox="0 0 16 16"><path d="M1.5 1.5 L11 3 L13.5 12.5" stroke="#777" stroke-width="1.1" fill="none"/><circle cx="1.5" cy="1.5" r="1.3" fill="#555"/><circle cx="11" cy="3" r="1.3" fill="#555"/><circle cx="13.5" cy="12.5" r="1.5" fill="#444"/><ellipse cx="8" cy="13.5" rx="6" ry="0.9" fill="#e2e2e2"/></svg>
<svg class="b" style="left:61px;top:392px;overflow:visible" width="16" height="16" viewBox="0 0 16 16"><path d="M1.5 10.5 L1.5 5.5 L5 1.5 L14.5 1.5 Q10 5 10.5 7 Q11 9 14.5 10.5z" fill="none" stroke="#7fa6d6" stroke-width="1"/><circle cx="5" cy="1.5" r="1.2" fill="#fff" stroke="#7fa6d6"/><circle cx="14.5" cy="1.5" r="1.2" fill="#fff" stroke="#7fa6d6"/><circle cx="1.5" cy="5.5" r="1.2" fill="#fff" stroke="#7fa6d6"/><circle cx="1.5" cy="10.5" r="1.2" fill="#fff" stroke="#7fa6d6"/><circle cx="14.5" cy="10.5" r="1.2" fill="#fff" stroke="#7fa6d6"/></svg>
<svg class="b" style="left:61px;top:410px;overflow:visible" width="16" height="16" viewBox="0 0 16 16"><path d="M0.8 8.5 Q8 -2 15.2 8.5" stroke="#1e3a7a" stroke-width="1.6" fill="none"/><path d="M4 3.5V8 M6.3 2.3V8 M8.5 2V8 M10.7 2.4V8 M13 3.6V8" stroke="#1e3a7a" stroke-width="1"/><rect x="0" y="8" width="16" height="1.8" fill="#1e3a7a"/><rect x="1.5" y="9" width="2" height="4" fill="#1e3a7a"/><rect x="12.5" y="9" width="2" height="4" fill="#1e3a7a"/></svg>
<svg class="b" style="left:42px;top:428px;overflow:visible" width="16" height="16" viewBox="0 0 16 16"><path d="M3 2 L7 2.5 L13.5 3 L14.5 5 L13.5 11 L9 12 L4 14 L2.5 8.5z M2.5 8.5 L14.5 5 M7 2.5 L7.5 8 L9 12 M7.5 8 L13.5 11 M9 12 L14.5 5" fill="none" stroke="#333" stroke-width="0.9"/><g fill="#e33"><circle cx="3" cy="2" r="0.9"/><circle cx="7" cy="2.5" r="0.9"/><circle cx="14.5" cy="5" r="0.9"/><circle cx="2.5" cy="8.5" r="0.9"/><circle cx="7.5" cy="8" r="0.9"/><circle cx="9" cy="12" r="0.9"/><circle cx="4" cy="14" r="0.9"/><circle cx="13.5" cy="11" r="0.9"/></g></svg>
<svg class="b" style="left:42px;top:446px;overflow:visible" width="16" height="16" viewBox="0 0 16 16"><path d="M3 1.5 L7 2 L13.5 3 L14.5 5 L13.5 11 L9 12 L4 13.5 L2.5 8.5z" fill="#3a4ef0" stroke="#222" stroke-width="0.9"/><path d="M2.5 8.5 L14.5 5 M7 2 L7.5 8 L9 12 M7.5 8 L13.5 11 M9 12 L14.5 5" fill="none" stroke="#223" stroke-width="0.8"/><g fill="#e33"><circle cx="3" cy="1.5" r="0.6"/><circle cx="14.5" cy="5" r="0.6"/><circle cx="4" cy="13.5" r="0.6"/><circle cx="9" cy="12" r="0.6"/></g></svg>
<svg class="b" style="left:42px;top:463px;overflow:visible" width="16" height="16" viewBox="0 0 16 16"><circle cx="9" cy="8.5" r="6.5" fill="#eef2f2" stroke="#9aa" stroke-width="1"/><path d="M9 4 V9 H13" stroke="#222" stroke-width="1" fill="none"/><path d="M7 1 Q2 1 2 7 L0 7 L3.5 11 L7 7 L5 7 Q5 4 7 4z" fill="#22c02a" stroke="#1a8a1a" stroke-width="0.5"/></svg>
<svg class="b" style="left:42px;top:481px;overflow:visible" width="16" height="16" viewBox="0 0 16 16"><rect x="0.5" y="7" width="8" height="8" rx="1" fill="#e0141a" stroke="#8a1010" stroke-width="0.6"/><rect x="8" y="8" width="7.5" height="7.5" rx="1" fill="#6cc040" stroke="#3a7a20" stroke-width="0.6"/><rect x="4" y="0.5" width="7" height="7.5" rx="1" fill="#2a8ae0" stroke="#1a5a9a" stroke-width="0.6"/><path d="M9 2.5 H12 V0.5 L15.5 4 L12 7.5 V5.5 H9z" fill="#5ac8f0"/></svg>
<svg class="b" style="left:42px;top:501px;overflow:visible" width="16" height="16" viewBox="0 0 16 16"><path d="M0.5 1.5 h5 l1 1 h7 v9 h-13z" fill="#fff6d8" stroke="#e0a840" stroke-width="1"/><rect x="2" y="3" width="3" height="1.5" fill="#f0d080"/><rect x="2" y="6" width="2" height="4" fill="#f5dc8a"/><rect x="4" y="6" width="1.5" height="3" fill="#3a8ad8"/><path d="M6 6 H10 V4 L14.5 7.5 L10 11 V9 H6z" fill="#3aa8f0"/></svg>
<svg class="b" style="left:42px;top:519px;overflow:visible" width="16" height="16" viewBox="0 0 16 16"><path d="M0.5 0.5 h5 l1 1 h7 v9 h-13z" fill="#fff6d8" stroke="#e0a840" stroke-width="1"/><rect x="2" y="5" width="3" height="5" fill="#f5dc8a"/><rect x="6" y="4.5" width="8" height="7.5" fill="#d8f0f6" stroke="#8aa" stroke-width="0.7"/><path d="M6.5 9 Q8 6 9 8.5 Q10.5 11 12 8 L14 8.5" stroke="#e04040" stroke-width="0.9" fill="none"/><circle cx="11.5" cy="5.5" r="2" fill="#f8e020"/></svg>
<svg class="b" style="left:316px;top:137px;" width="16" height="17" viewBox="0 0 16 17"><path d="M4.6 12.4 L7.5 7.9 L10.4 12.4" fill="none" stroke="#555" stroke-width="1.8"/></svg>
<svg class="b" style="left:316px;top:518px;" width="16" height="17" viewBox="0 0 16 17"><path d="M4.6 6.5 L7.5 11 L10.4 6.5" fill="none" stroke="#555" stroke-width="1.8"/></svg>
<div class="b" style="left:350px;top:692px;width:1114px;height:18px;background:#fff"></div>
<div class="b" style="left:352px;top:694px;width:11px;height:16px;background:#f0f0f0"></div>
<div class="b" style="left:364px;top:694px;width:77px;height:16px;background:#f0f0f0"></div>
<div class="b" style="left:442px;top:694px;width:46px;height:16px;background:#f0f0f0"></div>
<div class="b" style="left:489px;top:694px;width:975px;height:16px;background:#f0f0f0"></div>
<div class="b" style="left:351px;top:710px;width:1113px;height:1px;background:#a0a0a0"></div>
<div class="b" style="left:363px;top:693px;width:1px;height:198px;background:#a0a0a0"></div>
<div class="b" style="left:441px;top:693px;width:1px;height:198px;background:#a0a0a0"></div>
<div class="b" style="left:488px;top:693px;width:1px;height:198px;background:#a0a0a0"></div>
<div class="t" style="left:367.6px;top:694.09px;font-size:11px;color:#000;letter-spacing:-0.378px;">Group name</div>
<div class="t" style="left:445px;top:694.09px;font-size:11px;color:#000;letter-spacing:-0.667px;">Name</div>
<div class="b" style="left:352px;top:712px;width:11px;height:16px;background:#f0f0f0"></div>
<div class="b" style="left:351px;top:728px;width:137px;height:1px;background:#a0a0a0"></div>
<div class="t" style="left:366.8px;top:710.89px;font-size:11px;color:#000;letter-spacing:-0.444px;">FlowFM.ldb</div>
<div class="t" style="left:444.3px;top:710.89px;font-size:11px;color:#000;letter-spacing:-0.150px;">FIF_2</div>
<div class="b" style="left:352px;top:730px;width:11px;height:16px;background:#f0f0f0"></div>
<div class="b" style="left:351px;top:746px;width:137px;height:1px;background:#a0a0a0"></div>
<div class="t" style="left:366.8px;top:728.89px;font-size:11px;color:#000;letter-spacing:-0.444px;">FlowFM.ldb</div>
<div class="t" style="left:444.3px;top:728.89px;font-size:11px;color:#000;letter-spacing:-0.150px;">FIF_1</div>
<div class="b" style="left:352px;top:748px;width:11px;height:16px;background:#f0f0f0"></div>
<div class="b" style="left:351px;top:764px;width:137px;height:1px;background:#a0a0a0"></div>
<div class="t" style="left:366.8px;top:746.89px;font-size:11px;color:#000;letter-spacing:-0.444px;">FlowFM.ldb</div>
<div class="t" style="left:444.3px;top:746.89px;font-size:11px;color:#000;letter-spacing:-0.150px;">FIF_3</div>
<div class="b" style="left:352px;top:766px;width:11px;height:16px;background:#f0f0f0"></div>
<div class="b" style="left:351px;top:782px;width:137px;height:1px;background:#a0a0a0"></div>
<div class="t" style="left:366.8px;top:764.89px;font-size:11px;color:#000;letter-spacing:-0.444px;">FlowFM.ldb</div>
<div class="t" style="left:444.3px;top:764.89px;font-size:11px;color:#000;letter-spacing:-0.150px;">FIF_4</div>
<div class="b" style="left:352px;top:784px;width:11px;height:16px;background:#f0f0f0"></div>
<div class="b" style="left:351px;top:800px;width:137px;height:1px;background:#a0a0a0"></div>
<div class="t" style="left:366.8px;top:782.89px;font-size:11px;color:#000;letter-spacing:-0.444px;">FlowFM.ldb</div>
<div class="t" style="left:444.3px;top:782.89px;font-size:11px;color:#000;letter-spacing:-0.150px;">FIF_5</div>
<div class="b" style="left:352px;top:802px;width:11px;height:16px;background:#f0f0f0"></div>
<div class="b" style="left:351px;top:818px;width:137px;height:1px;background:#a0a0a0"></div>
<div class="t" style="left:366.8px;top:800.89px;font-size:11px;color:#000;letter-spacing:-0.444px;">FlowFM.ldb</div>
<div class="t" style="left:444.3px;top:800.89px;font-size:11px;color:#000;letter-spacing:-0.150px;">FIF_6</div>
<div class="b" style="left:352px;top:820px;width:11px;height:16px;background:#f0f0f0"></div>
<div class="b" style="left:351px;top:836px;width:137px;height:1px;background:#a0a0a0"></div>
<div class="t" style="left:366.8px;top:818.89px;font-size:11px;color:#000;letter-spacing:-0.444px;">FlowFM.ldb</div>
<div class="t" style="left:444.3px;top:818.89px;font-size:11px;color:#000;letter-spacing:-0.150px;">FIF_7</div>
<div class="b" style="left:352px;top:838px;width:11px;height:16px;background:#f0f0f0"></div>
<div class="b" style="left:351px;top:854px;width:137px;height:1px;background:#a0a0a0"></div>
<div class="t" style="left:366.8px;top:836.89px;font-size:11px;color:#000;letter-spacing:-0.444px;">FlowFM.ldb</div>
<div class="t" style="left:444.3px;top:836.89px;font-size:11px;color:#000;letter-spacing:-0.150px;">FIF_8</div>
<div class="b" style="left:352px;top:856px;width:11px;height:16px;background:#f0f0f0"></div>
<div class="b" style="left:351px;top:872px;width:137px;height:1px;background:#a0a0a0"></div>
<div class="t" style="left:366.8px;top:854.89px;font-size:11px;color:#000;letter-spacing:-0.444px;">FlowFM.ldb</div>
<div class="t" style="left:444.3px;top:854.89px;font-size:11px;color:#000;letter-spacing:-0.150px;">FIF_9</div>
<div class="b" style="left:352px;top:874px;width:11px;height:16px;background:#f0f0f0"></div>
<div class="b" style="left:351px;top:890px;width:137px;height:1px;background:#a0a0a0"></div>
<div class="t" style="left:366.8px;top:872.89px;font-size:11px;color:#000;letter-spacing:-0.444px;">FlowFM.ldb</div>
<div class="t" style="left:444.3px;top:872.89px;font-size:11px;color:#000;letter-spacing:-0.260px;">FIF_10</div>
<svg class="b" style="left:354px;top:715px;" width="7" height="10" viewBox="0 0 7 10"><path d="M0.5 0.5 L6 5 L0.5 9.5Z" fill="#000"/></svg>
<svg class="b" style="left:283px;top:99px;" width="8" height="4" viewBox="0 0 8 4"><path d="M0 0 H8 L4 4z" fill="#000"/></svg>
<svg class="b" style="left:302px;top:97px;" width="8" height="10" viewBox="0 0 8 10"><path d="M1.5 0.5 H6 V6.5 H1.5z" fill="none" stroke="#000" stroke-width="1"/><rect x="5" y="0" width="1.6" height="7" fill="#000"/><rect x="0" y="6" width="8" height="1.2" fill="#000"/><rect x="3.5" y="7" width="1" height="3" fill="#000"/></svg>
<svg class="b" style="left:319px;top:97px;" width="11" height="9" viewBox="0 0 11 9"><path d="M1 0.8 L10 8.2 M10 0.8 L1 8.2" stroke="#000" stroke-width="1.5"/></svg>
<svg class="b" style="left:283px;top:559px;" width="8" height="4" viewBox="0 0 8 4"><path d="M0 0 H8 L4 4z" fill="#000"/></svg>
<svg class="b" style="left:302px;top:557px;" width="8" height="10" viewBox="0 0 8 10"><path d="M1.5 0.5 H6 V6.5 H1.5z" fill="none" stroke="#000" stroke-width="1"/><rect x="5" y="0" width="1.6" height="7" fill="#000"/><rect x="0" y="6" width="8" height="1.2" fill="#000"/><rect x="3.5" y="7" width="1" height="3" fill="#000"/></svg>
<svg class="b" style="left:319px;top:557px;" width="11" height="9" viewBox="0 0 11 9"><path d="M1 0.8 L10 8.2 M10 0.8 L1 8.2" stroke="#000" stroke-width="1.5"/></svg>
<svg class="b" style="left:323px;top:582px;" width="5" height="3" viewBox="0 0 5 3"><path d="M0 0 H5 L2.5 3z" fill="#000"/></svg>
<div class="b" style="left:0px;top:610px;width:4px;height:21px;background:#c8e0f8;border:1px solid #99ccff;border-left:none;box-sizing:border-box"></div>
<svg class="b" style="left:6px;top:612px;" width="18" height="17" viewBox="0 0 18 17"><text x="1" y="7.6" font-family="Liberation Serif" font-weight="bold" font-size="9" fill="#2a3cc0">A</text><text x="1.5" y="15.8" font-family="Liberation Serif" font-weight="bold" font-size="9" fill="#a02020">Z</text><path d="M13.5 1 V15" stroke="#000" stroke-width="1.2"/><path d="M11 12 L13.5 15.5 L16 12" stroke="#000" stroke-width="1.2" fill="none"/></svg>
<div class="b" style="left:29px;top:611px;width:1px;height:21px;background:#8a8a8a"></div>
<svg class="b" style="left:36px;top:613px;" width="16" height="15" viewBox="0 0 16 15"><rect x="0.5" y="0.5" width="15" height="14" fill="#e8e8e8" stroke="#a8a8a8"/><path d="M0.5 2.5 H15.5" stroke="#b8b8b8"/><path d="M2.5 4.5 H7 L8 3.5 H12.5 V12.5 H2.5z" fill="none" stroke="#aaa"/><circle cx="4.5" cy="7.5" r="0.7" fill="#999"/><circle cx="4.5" cy="10" r="0.7" fill="#999"/><path d="M6 10 H10" stroke="#aaa"/></svg>
<svg class="b" style="left:346px;top:92px;" width="16" height="16" viewBox="0 0 16 16"><defs><radialGradient id="gl" cx="0.45" cy="0.75" r="0.7"><stop offset="0" stop-color="#7ab8f0"/><stop offset="0.6" stop-color="#2a88d8"/><stop offset="1" stop-color="#1a5aa8"/></radialGradient></defs><ellipse cx="8" cy="14.5" rx="6" ry="1.2" fill="#ddd"/><circle cx="7.5" cy="7.3" r="7.2" fill="url(#gl)"/><path d="M4 3 Q5.5 1.5 7 2.5 Q6 4.5 4.5 4.5z M8 2 Q11 1.5 13 4 Q12.5 6 13.5 8 Q12 11 11 13 Q10.5 10 10.5 8 Q9 6 8.5 4z M1 5.5 Q2.5 6.5 2 9 Q1 8 1 5.5z" fill="#3ad04a"/></svg>
<svg class="b" style="left:411px;top:95px;" width="11" height="9" viewBox="0 0 11 9"><path d="M1 0.8 L10 8.2 M10 0.8 L1 8.2" stroke="#000" stroke-width="1.5"/></svg>
<svg class="b" style="left:442px;top:672px;" width="10" height="9" viewBox="0 0 10 9"><path d="M1 0.8 L9 8.2 M9 0.8 L1 8.2" stroke="#000" stroke-width="1.4"/></svg>
<div class="b" style="left:1045px;top:660px;width:1px;height:6px;background:#8a8a8a"></div>
<div class="b" style="left:1160px;top:660px;width:1px;height:6px;background:#8a8a8a"></div>
<svg class="b" style="left:1048px;top:661px;" width="7" height="3" viewBox="0 0 7 3"><path d="M0 0 H7 L3.5 3z" fill="#585858"/></svg>
<svg class="b" style="left:1150px;top:661px;" width="7" height="3" viewBox="0 0 7 3"><path d="M0 0 H7 L3.5 3z" fill="#585858"/></svg>
<div class="b" style="left:1059px;top:662px;width:87px;height:3px;background:repeating-linear-gradient(to right,#8a8a8a 0 1px,transparent 1px 2px)"></div>
<svg class="b" style="left:344px;top:111px;shape-rendering:crispEdges" width="1120" height="556" viewBox="0 0 1120 556"><polyline points="874.7,2.5 877.9,4.1 888.5,20.7 893.4,24.5 901.4,35.7 903.5,40.5 911.0,54.9 910.5,57.5 906.8,60.3 897.1,65.6 887.5,69.5 884.8,74.7 882.7,81.1 883.2,88.5 884.9,94.8 887.5,105.9 894.3,121.3 896.0,127.3 894.3,134.1 887.5,140.1 883.2,143.5 873.8,147.8 866.9,153.8 854.9,165.8 846.4,175.2 841.3,181.2 833.6,192.3 823.3,205.1 819.9,211.1 815.6,219.7 815.6,226.5 809.6,243.6 808.6,246.5 801.7,256.8 800.0,264.5 793.2,267.9 784.6,274.7 779.5,280.7 769.2,289.3 764.1,295.3 758.9,300.4 738.4,319.2 734.1,326.1 724.7,333.8 717.9,340.6 704.2,347.5 690.5,354.0 672.7,362.4 654.9,375.3 635.1,385.2 619.3,394.1 605.4,404.0 579.7,417.8 563.9,427.7 556.0,429.3 540.1,436.6 518.4,451.4 512.4,457.4 515.4,460.7 526.3,462.9 528.3,467.3 533.2,478.1 536.2,489.0 537.2,495.9 534.2,503.9 528.3,515.7 516.4,530.2" fill="none" stroke="#000" stroke-width="1"/><polyline points="887.5,2.5 897.1,13.8 901.5,19.5 908.9,24.5 913.2,26.5 917.5,31.5 918.5,35.7 919.1,45.8 921.7,52.8 926.0,58.7 932.5,68.3 937.8,71.5 946.3,71.5 953.3,70.6 960.2,67.7 979.0,63.8 991.0,59.5 1004.7,52.7 1016.7,42.4 1022.6,31.3 1030.3,25.3 1037.2,21.9 1044.9,19.3 1049.2,15.9 1062.9,9.0 1074.8,3.1 1080.0,2.5" fill="none" stroke="#000" stroke-width="1"/><polyline points="1089.4,2.5 1085.1,3.1 1066.3,11.6 1044.0,23.6 1040.6,27.0 1038.9,33.0 1035.5,37.3 1026.9,42.4 1021.8,44.1 1008.1,56.1 1005.5,58.7 985.9,66.4 966.2,77.5 972.2,82.6 980.7,88.6 985.0,93.7 1001.3,95.1 1003.8,101.5 1006.4,104.0 1011.5,106.6 1010.7,112.5 1012.4,115.1 1020.9,122.0 1021.1,129.5 1018.5,135.4 1016.0,144.0 1011.8,149.5 1010.6,153.0 1005.9,160.7 1000.0,164.2 989.4,173.6 984.1,175.4 983.0,177.7 983.6,181.3 988.3,189.5 991.8,197.1" fill="none" stroke="#000" stroke-width="1"/><polyline points="984.7,195.4 980.6,187.7 977.7,184.2 976.5,178.3 973.0,173.0 970.6,164.8 962.4,154.8 958.9,149.5 956.1,145.7 942.4,118.3 941.6,112.3 936.5,111.5 931.3,113.2 929.6,121.7 932.2,133.7 934.7,139.7 928.7,144.8 930.6,149.5 939.4,167.7 944.1,169.5 944.1,177.7 943.0,179.5 943.6,188.3 945.3,191.9 949.4,196.6 950.6,203.6 953.0,207.1 952.4,211.9 955.3,221.3 960.6,230.1 964.7,233.6 970.0,240.1 982.4,246.6 996.5,248.9 1004.1,251.9" fill="none" stroke="#000" stroke-width="1"/><polyline points="556.9,534.5 566.8,509.8 568.8,493.0 571.8,457.4 573.8,451.4 578.7,442.9 593.5,439.6 609.4,436.6 627.2,429.7 658.8,420.8 684.5,406.9 697.4,399.0 706.3,399.6 717.2,396.0 719.2,391.1 726.1,384.2 731.5,378.3 747.0,366.3 748.7,362.9 762.4,352.6 772.6,347.5 782.9,337.2 798.3,324.4 813.7,312.4 817.1,306.4 828.3,297.0 830.0,287.6 833.4,284.1 831.7,279.0 837.7,273.0 844.5,269.6 845.4,263.6 839.4,259.3 840.2,247.3 845.0,239.5 848.1,224.8 851.5,216.3 854.9,206.0 862.6,195.7 868.6,188.0 872.1,186.3 872.9,182.0 876.3,177.8 885.7,172.6 896.0,169.2 906.3,158.1 914.0,152.9 920.0,151.6 926.8,155.5 933.0,164.2 938.3,168.9 937.1,171.3 937.7,181.3 937.1,190.7 938.3,193.6 943.0,198.9 945.9,206.0 948.9,215.4 950.6,223.6 954.1,229.5 957.7,231.9 960.0,236.6 965.3,242.4 975.3,247.1 983.5,249.5 998.9,251.9 1003.6,252.5" fill="none" stroke="#000" stroke-width="1"/></svg>
</body></html>
